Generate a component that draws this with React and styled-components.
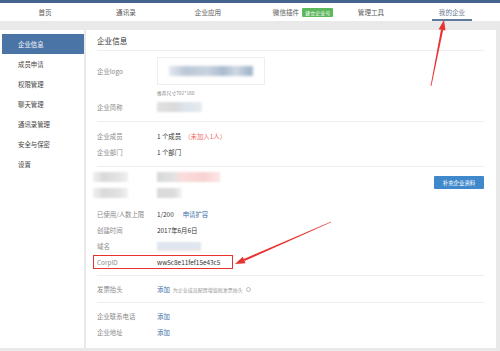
import React from "react"
import styled, { createGlobalStyle } from "styled-components"

const colors = {
  page: "#e9e9ea",
  strip: "#46658e",
  active: "#4a74a6",
  label: "#8a8a8a",
  text: "#333",
  line: "#efefef",
  link: "#3a6ea8",
  red: "#e8322f",
  warn: "#f06a6a",
  button: "#3f88cc",
}

const GlobalStyle = createGlobalStyle`
  html, body {
    margin: 0;
    padding: 0;
    background: ${colors.page};
    font-family: "Noto Sans CJK SC", "Noto Sans", "Liberation Sans", sans-serif;
    -webkit-font-smoothing: antialiased;
  }
`

const Page = styled.div`
  position: relative;
  width: 500px;
  height: 351px;
  overflow: hidden;
`

const TopStrip = styled.div`
  height: 3px;
  background: ${colors.strip};
`

const Nav = styled.nav`
  display: flex;
  align-items: stretch;
  height: 18px;
  background: #fff;
`

const NavItem = styled.div`
  position: relative;
  display: flex;
  align-items: center;
  justify-content: center;
  gap: 3px;
  width: ${p => p.$w}px;
  margin-left: ${p => p.$ml || 0}px;
  font-size: 6.6px;
  color: #5a5a5a;
  ${p => p.$current && `
    color: #6a7b92;
    border-bottom: 2px solid #5f7a9c;
    box-sizing: border-box;
    padding-top: 2px;
  `}
`

const Badge = styled.span`
  background: #5cb85c;
  color: #fff;
  font-size: 5px;
  padding: 1px 3px;
  border-radius: 1px;
`

const Body = styled.div`
  display: flex;
  align-items: flex-start;
  gap: 2px;
  padding-top: 9px;
`

const Sidebar = styled.aside`
  width: 84px;
  height: 318px;
  background: #fff;
  padding-top: 4px;
  box-sizing: border-box;
`

const SideItem = styled.div`
  height: 20px;
  display: flex;
  align-items: center;
  padding-left: 16px;
  margin-left: 2px;
  font-size: 6.4px;
  color: ${p => (p.$active ? "#fff" : "#444")};
  background: ${p => (p.$active ? colors.active : "transparent")};
`

const Panel = styled.main`
  width: 410px;
  height: 318px;
  background: #fff;
  padding: 0 12px 0 11px;
  box-sizing: border-box;
`

const Title = styled.div`
  height: 20px;
  display: flex;
  align-items: center;
  font-size: 7.6px;
  color: #333;
  border-bottom: 1px solid ${colors.line};
`

const Section = styled.section`
  position: relative;
  padding: ${p => p.$pad || "6px 0"};
  border-bottom: ${p => (p.$last ? "none" : `1px solid ${colors.line}`)};
`

const Row = styled.div`
  display: flex;
  align-items: center;
  height: ${p => p.$h || 16}px;
  margin-top: ${p => p.$mt || 0}px;
  font-size: 6.4px;
  color: ${colors.text};
  ${p => p.$boxed && `
    margin-left: -4px;
    padding-left: 3px;
    width: 140px;
    height: 14px;
    box-sizing: border-box;
    border: 1.5px solid ${colors.red};
  `}
`

const Label = styled.div`
  width: 60px;
  flex-shrink: 0;
  color: ${colors.label};
`

const Value = styled.div`
  display: flex;
  align-items: center;
  gap: 3px;
`

const Warn = styled.span`
  color: ${colors.warn};
`

const Link = styled.span`
  color: ${colors.link};
  margin-left: ${p => p.$ml || 0}px;
`

const Hint = styled.span`
  font-size: 5px;
  color: #999;
  display: inline-flex;
  align-items: center;
  gap: 3px;
`

const InfoDot = styled.span`
  width: 5px;
  height: 5px;
  border-radius: 50%;
  border: 0.7px solid #bbb;
  box-sizing: border-box;
`

const LogoBox = styled.div`
  width: 108px;
  height: 28px;
  border: 1px solid #eee;
  box-sizing: border-box;
  display: flex;
  align-items: center;
  justify-content: center;
`

const Smudge = styled.div`
  width: ${p => p.$w}px;
  height: ${p => p.$h || 10}px;
  background: ${p => p.$bg};
  filter: blur(${p => p.$blur || 1}px);
  margin-left: ${p => p.$ml || 0}px;
  flex-shrink: 0;
`

const HintRow = styled.div`
  padding-left: 60px;
  height: 8px;
  margin-top: 3px;
  display: flex;
  align-items: center;
  font-size: 4.8px;
  color: #888;
`

const Button = styled.button`
  position: absolute;
  right: 0;
  top: 9px;
  width: 50px;
  height: 13px;
  border: none;
  border-radius: 1px;
  background: ${colors.button};
  color: #fff;
  font-family: inherit;
  font-size: 5.4px;
  padding: 0;
`

const Overlay = styled.svg`
  position: absolute;
  left: 0;
  top: 0;
  pointer-events: none;
`

const sideItems = ["企业信息", "成员申请", "权限管理", "聊天管理", "通讯录管理", "安全与保密", "设置"]

function Arrow({ x1, y1, x2, y2 }) {
  const dx = x2 - x1
  const dy = y2 - y1
  const len = Math.hypot(dx, dy)
  const ux = dx / len
  const uy = dy / len
  const bx = x2 - ux * 10
  const by = y2 - uy * 10
  const px = -uy
  const py = ux
  const shaft = `${x1 + px * 0.4},${y1 + py * 0.4} ${bx + px * 1.1},${by + py * 1.1} ${bx - px * 1.1},${by - py * 1.1} ${x1 - px * 0.4},${y1 - py * 0.4}`
  const head = `${x2},${y2} ${bx + px * 3.5},${by + py * 3.5} ${bx - px * 3.5},${by - py * 3.5}`
  return (
    <g fill={colors.red}>
      <polygon points={shaft} />
      <polygon points={head} />
    </g>
  )
}

export default function App() {
  return (
    <Page>
      <GlobalStyle />
      <TopStrip />
      <Nav>
        <NavItem $w={90}>首页</NavItem>
        <NavItem $w={72}>通讯录</NavItem>
        <NavItem $w={92}>企业应用</NavItem>
        <NavItem $w={98}>
          微信插件 <Badge>建立企业号</Badge>
        </NavItem>
        <NavItem $w={38}>管理工具</NavItem>
        <NavItem $w={40} $ml={42} $current>我的企业</NavItem>
      </Nav>
      <Body>
        <Sidebar>
          {sideItems.map((t, i) => (
            <SideItem key={t} $active={i === 0}>{t}</SideItem>
          ))}
        </Sidebar>
        <Panel>
          <Title>企业信息</Title>
          <Section>
            <Row $h={28}>
              <Label>企业logo</Label>
              <LogoBox>
                <Smudge $w={84} $h={10} $blur={1.5} $bg="linear-gradient(90deg,#e4e8ee,#b9c6d6 20%,#c9d3df 45%,#a9bbd0 65%,#cfd8e3 80%,#a6b8cd 95%)" />
              </LogoBox>
            </Row>
            <HintRow>推荐尺寸702*180</HintRow>
            <Row $mt={3}>
              <Label>企业简称</Label>
              <Smudge $w={45} $bg="linear-gradient(90deg,#e2e2e2,#dadada 40%,#dde3ea 60%,#e6ebf2)" />
            </Row>
          </Section>
          <Section>
            <Row>
              <Label>企业成员</Label>
              <Value>1 个成员 <Warn>（未加入1人）</Warn></Value>
            </Row>
            <Row>
              <Label>企业部门</Label>
              <Value>1 个部门</Value>
            </Row>
          </Section>
          <Section $pad="2px 0 6px">
            <Row>
              <Smudge $w={35} $ml={-4} $bg="linear-gradient(90deg,#f1f1f1,#d9d9d9 30%,#e3e3e3 70%,#f0f0f0)" />
              <Smudge $w={63} $ml={29} $bg="linear-gradient(90deg,#d8d8d8,#e2e2e2 25%,#fbdcdc 40%,#f9d2d2 75%,#fde6e6)" />
            </Row>
            <Button>补充企业资料</Button>
            <Row>
              <Smudge $w={35} $ml={-4} $bg="linear-gradient(90deg,#f1f1f1,#dadada 30%,#e0e0e0 70%,#f0f0f0)" />
              <Smudge $w={25} $ml={29} $bg="linear-gradient(90deg,#dadada,#dcdcdc 70%,#f5f5f5)" />
            </Row>
            <Row $mt={5}>
              <Label>已使用/人数上限</Label>
              <Value>1/200<Link $ml={6}>申请扩容</Link></Value>
            </Row>
            <Row>
              <Label>创建时间</Label>
              <Value>2017年6月6日</Value>
            </Row>
            <Row>
              <Label>域名</Label>
              <Smudge $w={44} $h={9} $bg="linear-gradient(180deg,#dfe6ef 75%,#fbe2e2)" />
            </Row>
            <Row $mt={1} $boxed>
              <Label>CorpID</Label>
              <Value>ww5c8e11fef15e43c5</Value>
            </Row>
          </Section>
          <Section $pad="5px 0">
            <Row>
              <Label>发票抬头</Label>
              <Value>
                <Link>添加</Link>
                <Hint>为企业成员配置增值税发票抬头 <InfoDot /></Hint>
              </Value>
            </Row>
          </Section>
          <Section $pad="5px 0" $last>
            <Row>
              <Label>企业联系电话</Label>
              <Link>添加</Link>
            </Row>
            <Row>
              <Label>企业地址</Label>
              <Link>添加</Link>
            </Row>
          </Section>
        </Panel>
      </Body>
      <Overlay width="500" height="351" viewBox="0 0 500 351">
        <Arrow x1={431} y1={86} x2={444} y2={20} />
        <Arrow x1={331} y1={222} x2={235} y2={264} />
      </Overlay>
    </Page>
  )
}
